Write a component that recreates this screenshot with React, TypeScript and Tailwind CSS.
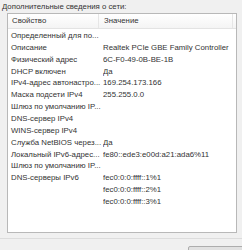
const rows: [string, string][] = [
  ['Определенный для по...', ''],
  ['Описание', 'Realtek PCIe GBE Family Controller'],
  ['Физический адрес', '6C-F0-49-0B-BE-1B'],
  ['DHCP включен', 'Да'],
  ['IPv4-адрес автонастро...', '169.254.173.166'],
  ['Маска подсети IPv4', '255.255.0.0'],
  ['Шлюз по умолчанию IP...', ''],
  ['DNS-сервер IPv4', ''],
  ['WINS-сервер IPv4', ''],
  ['Служба NetBIOS через...', 'Да'],
  ['Локальный IPv6-адрес...', 'fe80::ede3:e00d:a21:ada6%11'],
  ['Шлюз по умолчанию IP...', ''],
  ['DNS-серверы IPv6', 'fec0:0:0:ffff::1%1'],
  ['', 'fec0:0:0:ffff::2%1'],
  ['', 'fec0:0:0:ffff::3%1'],
];

export default function App() {
  return (
    <div
      className="w-[242px] h-[250px] overflow-hidden bg-[#f0f0f0] text-[#333] text-[7.8px]"
      style={{ fontFamily: '"Liberation Sans", Arial, sans-serif' }}
    >
      {/* заголовок */}
      <div className="h-[13px] pl-[2px] pt-[2px] leading-[9px]">Дополнительные сведения о сети:</div>

      {/* список */}
      <div className="ml-[7px] w-[230px] h-[220px] border border-[#b8b8b8] bg-white">
        <div className="flex h-[15px] items-center border-b border-[#e3e3e3] bg-gradient-to-b from-white to-[#f4f4f4]">
          <div className="w-[91px] h-full flex items-center pl-[4px] border-r border-[#e6e6e6]">Свойство</div>
          <div className="flex-1 h-full flex items-center pl-[5px] border-r border-[#e6e6e6]">Значение</div>
          <div className="w-[3px]" />
        </div>
        <div className="pt-[1px]">
          {rows.map(([name, value], i) => (
            <div key={i} className="flex h-[11.86px] items-center leading-[10px]">
              <div className="w-[95px] pl-[3px] whitespace-nowrap overflow-hidden">{name}</div>
              <div className="flex-1 whitespace-nowrap overflow-hidden">{value}</div>
            </div>
          ))}
        </div>
      </div>

      {/* нижняя часть */}
      <div className="mt-[5px] border-t border-[#dcdcdc] h-[8px]" />
      <div className="flex justify-end">
        <div className="w-[58px] h-[20px] mr-[-4px] rounded-[2px] border border-[#adadad] bg-[#e1e1e1]" />
      </div>
    </div>
  );
}
